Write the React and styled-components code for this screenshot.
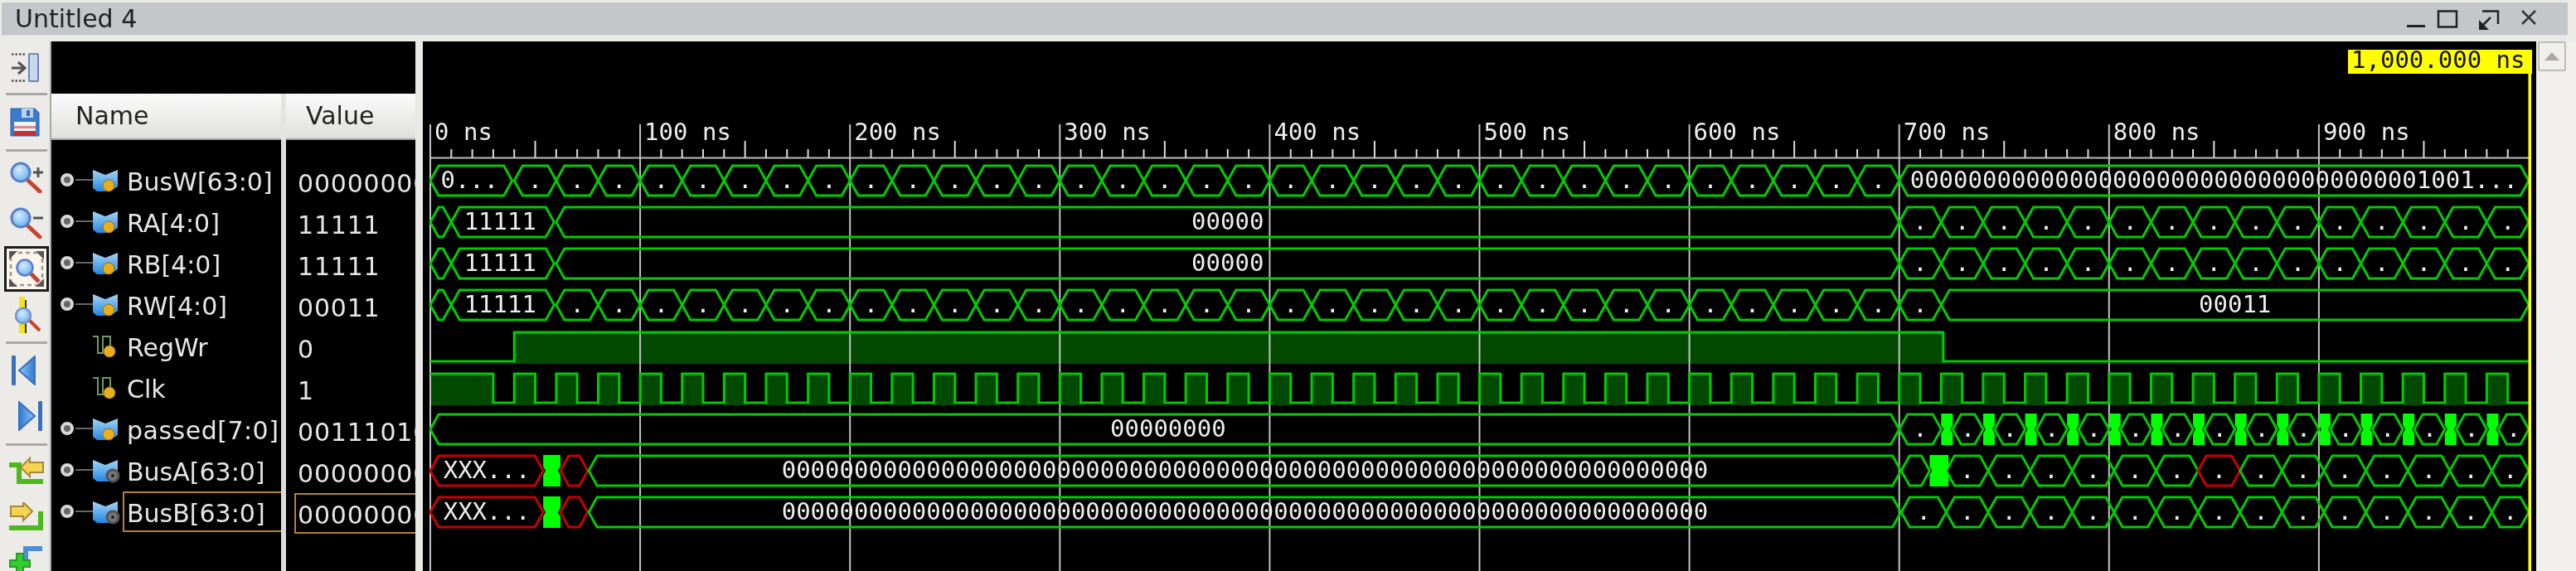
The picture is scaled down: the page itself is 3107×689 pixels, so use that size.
import React from "react";
import styled, { createGlobalStyle } from "styled-components";

const Global = createGlobalStyle`
  html, body { margin: 0; padding: 0; height: 100%; overflow: hidden; background: #eaeae6; }
  #root { height: 100%; }
`;

const Page = styled.div`
  width: 3107px;
  height: 689px;
  display: flex;
  flex-direction: column;
  overflow: hidden;
  background: #eaeae6;
  font-family: "DejaVu Sans", sans-serif;
  filter: blur(0.7px);
`;

const TitleBar = styled.div`
  height: 40px;
  margin: 3px 10px 0 2px;
  display: flex;
  align-items: center;
  justify-content: space-between;
  background: #c3c7ca;
  border-bottom: 1px solid #d8d8d6;
  box-sizing: border-box;
`;

const TitleText = styled.span`
  font-size: 30px;
  color: #222;
  margin-left: 16px;
  line-height: 40px;
`;

const WindowIcons = styled.svg`
  width: 198px;
  height: 40px;
  flex: none;
`;

const Body = styled.div`
  flex: 1;
  display: flex;
  margin-top: 7px;
  min-height: 0;
`;

const Toolbar = styled.div`
  width: 60px;
  flex: none;
  display: flex;
  flex-direction: column;
  background: #ecebe8;
  border-right: 2px solid #a9a9a6;
`;

const ToolSlot = styled.div`
  height: ${(p) => p.$h}px;
  padding-bottom: ${(p) => p.$pb || 0}px;
  padding-left: ${(p) => p.$pl || 0}px;
  box-sizing: border-box;
  flex: none;
  display: flex;
  align-items: center;
  justify-content: ${(p) => (p.$pl ? "flex-start" : "center")};
`;

const ToolSep = styled.div`
  height: 3px;
  flex: none;
  margin: 0 3px 0 7px;
  background: #a8a8a4;
`;

const ActiveTool = styled.div`
  width: 54px;
  height: 55px;
  margin-left: 4px;
  box-sizing: border-box;
  border: 3px solid #1c1c1c;
  background: #fbf5ea;
  display: flex;
  align-items: center;
  justify-content: center;
`;

const TreePane = styled.div`
  width: 439px;
  flex: none;
  display: flex;
  flex-direction: column;
  background: #000;
`;

const TreeTop = styled.div`
  height: 63px;
  flex: none;
  background: #000;
`;

const HeaderRow = styled.div`
  height: 56px;
  flex: none;
  display: flex;
  background: #e4e4e2;
`;

const HeaderCell = styled.div`
  width: ${(p) => p.$w}px;
  margin-left: ${(p) => p.$ml || 0}px;
  padding-left: ${(p) => p.$pl}px;
  box-sizing: border-box;
  font-size: 30px;
  line-height: 54px;
  color: #222;
  background: linear-gradient(#fbfbfb, #dfdfdd);
  border-bottom: 2px solid #9c9c9a;
`;

const TreeColumns = styled.div`
  flex: 1;
  display: flex;
  min-height: 0;
`;

const Column = styled.div`
  width: ${(p) => p.$w}px;
  flex: none;
  padding-top: ${(p) => p.$pt}px;
  box-sizing: border-box;
  overflow: hidden;
`;

const Divider = styled.div`
  width: 6px;
  flex: none;
  background: #dcdcda;
`;

const NameRow = styled.div`
  height: 50px;
  display: flex;
  align-items: flex-start;
  padding-left: 9px;
  box-sizing: border-box;
`;

const TreeGlyph = styled.svg`
  width: 80px;
  height: 50px;
  flex: none;
`;

const NameText = styled.div`
  flex: 1;
  height: 49px;
  margin-left: -3px;
  padding-left: 3px;
  box-sizing: border-box;
  font-size: 30px;
  line-height: 50px;
  letter-spacing: ${(p) => p.$tracking || 0}px;
  color: #e6e6e6;
  white-space: nowrap;
  border: 2px solid ${(p) => (p.$selected ? "#b5842a" : "transparent")};
  border-right: none;
  overflow: hidden;
`;

const ValueRow = styled.div`
  height: 49px;
  margin: 0 0 1px 10px;
  padding-left: 2px;
  box-sizing: border-box;
  font-size: 30px;
  letter-spacing: 0.8px;
  line-height: 50px;
  color: #e6e6e6;
  white-space: nowrap;
  overflow: hidden;
  border: 2px solid ${(p) => (p.$selected ? "#b5842a" : "transparent")};
  border-right: none;
`;

const Gap = styled.div`
  width: 9px;
  flex: none;
  background: #e8e8e5;
`;

const WavePane = styled.svg`
  width: 2549px;
  height: 639px;
  flex: none;
  display: block;
  background: #000;
`;

const WaveLabel = styled.text`
  font-family: "DejaVu Sans Mono", monospace;
  font-size: 29px;
  fill: ${(p) => p.$fill || "#eeeeee"};
`;

const ScrollColumn = styled.div`
  flex: 1;
  padding-left: 2px;
  background: #f1f0ed;
`;

const ScrollUp = styled.div`
  width: 34px;
  height: 36px;
  box-sizing: border-box;
  background: #f0efec;
  border: 2px solid #bdbdb9;
  border-radius: 2px;
  display: flex;
  align-items: center;
  justify-content: center;
`;

const ScrollArrow = styled.div`
  width: 0;
  height: 0;
  border-left: 9px solid transparent;
  border-right: 9px solid transparent;
  border-bottom: 10px solid #a8a8a4;
`;

/* ---------- toolbar drawings ---------- */
const lensDefs = (
  <radialGradient id="lens" cx="0.4" cy="0.35" r="0.8">
    <stop offset="0" stopColor="#d6ecff" />
    <stop offset="1" stopColor="#58a6ee" />
  </radialGradient>
);

const IconPin = () => (
  <svg width="33" height="35" viewBox="0 0 33 35">
    <path d="M0 1.5H18M0 33.5H18" stroke="#555" strokeWidth="2.5" strokeDasharray="2.5 2" />
    <path d="M0 18H15M8 11l8 7-8 7" fill="none" stroke="#555" strokeWidth="3" />
    <rect x="21" y="1" width="11" height="33" rx="1" fill="#c9d8ee" stroke="#6a86b8" strokeWidth="2" />
  </svg>
);

const IconSave = () => (
  <svg width="36" height="35" viewBox="0 0 36 35">
    <path d="M1 1H30L35 6V34H1Z" fill="#3a7ccc" stroke="#2c5fa8" />
    <rect x="14" y="1" width="14" height="11" fill="#b9d3f0" />
    <rect x="20" y="3" width="4" height="7" fill="#3a6ab0" />
    <rect x="5" y="17" width="26" height="17" fill="#f2f2f2" />
    <rect x="5" y="22" width="26" height="3" fill="#d98a8a" />
    <rect x="5" y="28" width="26" height="6" fill="#c62f36" />
  </svg>
);

const IconZoom = ({ plus }) => (
  <svg width="42" height="38" viewBox="0 0 42 38">
    <defs>{lensDefs}</defs>
    <path d="M21 21L37 36" stroke="#c8432e" strokeWidth="5" strokeLinecap="round" />
    <circle cx="14" cy="13" r="11" fill="url(#lens)" stroke="#5a7fc8" strokeWidth="3" />
    <path d="M29 13H41" stroke="#555" strokeWidth="3" />
    {plus && <path d="M35 7V19" stroke="#555" strokeWidth="3" />}
  </svg>
);

const IconFit = () => (
  <svg width="44" height="45" viewBox="0 0 44 45">
    <defs>{lensDefs}</defs>
    <rect x="3" y="3" width="38" height="39" fill="none" stroke="#999" strokeWidth="2.5" strokeDasharray="5 4" />
    <path d="M1 1H11L1 11ZM43 1H33L43 11ZM1 44H11L1 34ZM43 44H33L43 34Z" fill="#555" />
    <path d="M27 28L37 38" stroke="#c8432e" strokeWidth="5" />
    <circle cx="20" cy="21" r="9.5" fill="url(#lens)" stroke="#5a7fc8" strokeWidth="2.5" />
  </svg>
);

const IconCursor = () => (
  <svg width="32" height="44" viewBox="0 0 32 44">
    <defs>{lensDefs}</defs>
    <path d="M5 0h7v44h-7z" fill="#f3e318" />
    <path d="M12 4h2v40h-2z" fill="#333" />
    <path d="M15 26L30 41" stroke="#c8432e" strokeWidth="4" />
    <circle cx="10" cy="23" r="9" fill="url(#lens)" stroke="#7795c8" strokeWidth="2.5" />
  </svg>
);

const IconPrev = () => (
  <svg width="30" height="36" viewBox="0 0 30 36">
    <defs>
      <linearGradient id="tri" x1="0" x2="1">
        <stop offset="0" stopColor="#8cc8f6" />
        <stop offset="1" stopColor="#2f78d0" />
      </linearGradient>
    </defs>
    <rect x="0" y="0" width="5" height="36" rx="1" fill="#3b70b8" />
    <path d="M9 18L28 1V35Z" fill="url(#tri)" stroke="#3b70b8" strokeWidth="2" />
  </svg>
);

const IconNext = () => (
  <svg width="30" height="36" viewBox="0 0 30 36">
    <defs>
      <linearGradient id="tri2" x1="0" x2="1">
        <stop offset="0" stopColor="#2f78d0" />
        <stop offset="1" stopColor="#8cc8f6" />
      </linearGradient>
    </defs>
    <rect x="25" y="0" width="5" height="36" rx="1" fill="#3b70b8" />
    <path d="M21 18L2 1V35Z" fill="url(#tri2)" stroke="#3b70b8" strokeWidth="2" />
  </svg>
);

const IconImport = () => (
  <svg width="42" height="36" viewBox="0 0 42 36">
    <path d="M0 10H12V30H41" fill="none" stroke="#4cb81a" strokeWidth="6" />
    <path d="M14 13L25 2V7H41V19H25V24Z" fill="#f4d452" stroke="#a8873a" strokeWidth="2" />
  </svg>
);

const IconExport = () => (
  <svg width="42" height="36" viewBox="0 0 42 36">
    <path d="M0 31H38V11" fill="none" stroke="#4cb81a" strokeWidth="6" />
    <path d="M28 11L17 0V5H2V17H17V22Z" fill="#f4d452" stroke="#a8873a" strokeWidth="2" />
  </svg>
);

const IconAdd = () => (
  <svg width="42" height="36" viewBox="0 0 42 36">
    <path d="M20 24V6H40" fill="none" stroke="#4d8ed6" strokeWidth="6" />
    <path d="M9 12h8v8h8v8h-8v8H9v-8H1v-8h8z" fill="#2fd02a" stroke="#2a9a24" strokeWidth="2" />
  </svg>
);

/* ---------- signal tree ---------- */
const signals = [
  { name: "BusW[63:0]", value: "00000000", kind: "bus", badge: "lock" },
  { name: "RA[4:0]", value: "11111", kind: "bus", badge: "lock" },
  { name: "RB[4:0]", value: "11111", kind: "bus", badge: "lock" },
  { name: "RW[4:0]", value: "00011", kind: "bus", badge: "lock" },
  { name: "RegWr", value: "0", kind: "bit", badge: "lock" },
  { name: "Clk", value: "1", kind: "bit", badge: "lock" },
  { name: "passed[7:0]", value: "00111010", kind: "bus", badge: "lock", tracking: 0.5 },
  { name: "BusA[63:0]", value: "00000000", kind: "bus", badge: "gear" },
  { name: "BusB[63:0]", value: "00000000", kind: "bus", badge: "gear", selected: true },
];

const Glyph = ({ kind, badge, id }) => (
  <TreeGlyph viewBox="0 0 80 50">
    <defs>
      <linearGradient id={`blue${id}`} x1="0" y1="0" x2="0" y2="1">
        <stop offset="0" stopColor="#a6d4f2" />
        <stop offset="1" stopColor="#1f86e6" />
      </linearGradient>
    </defs>
    {kind === "bus" ? (
      <>
        <circle cx="10" cy="24" r="6" fill="#666" stroke="#d8d8d8" strokeWidth="4" />
        <path d="M20 24H41" stroke="#666" strokeWidth="2" />
        <path d="M41 12L56 18L71 12V32L62 38H46L41 34Z" fill={`url(#blue${id})`} />
      </>
    ) : (
      <path d="M41 13H47V33H53V13H62V32" fill="none" stroke="#6f9a5e" strokeWidth="2" />
    )}
    {badge === "lock" ? (
      <circle cx={kind === "bus" ? 60 : 61} cy="31" r="7" fill="#e8ae1e" stroke="#8d6d1a" />
    ) : (
      <>
        <circle cx="65" cy="31" r="7" fill="#777" stroke="#555" strokeWidth="3" />
        <circle cx="65" cy="31" r="2" fill="#222" />
      </>
    )}
  </TreeGlyph>
);

/* ---------- waveform data ---------- */
const X = (t) => 519 + 2.531 * t;
const rowTop = (i) => 200 + 50 * i;
const GREEN = "#00cc00";
const RED = "#c80000";

const seq = (from, to, step) => {
  const out = [];
  for (let t = from; t < to - 0.01; t += step) out.push([t, Math.min(t + step, to)]);
  return out;
};
const dots = (from, to, step = 20) => seq(from, to, step).map(([a, b]) => ({ a, b, label: "." }));

const buses = [
  [
    { a: 0, b: 39, label: "0...", dx: -2 },
    ...dots(40, 700),
    { a: 700, b: 1000, label: "0".repeat(35) + "1001..." },
  ],
  [
    { a: 0, b: 10 },
    { a: 10, b: 59, label: "11111", dx: -3 },
    { a: 60, b: 700, label: "00000" },
    ...dots(700, 1000),
  ],
  [
    { a: 0, b: 10 },
    { a: 10, b: 59, label: "11111", dx: -3 },
    { a: 60, b: 700, label: "00000" },
    ...dots(700, 1000),
  ],
  [
    { a: 0, b: 10 },
    { a: 10, b: 59, label: "11111", dx: -3 },
    ...dots(60, 720),
    { a: 720, b: 1000, label: "00011" },
  ],
];

const passedSegs = [
  { a: 0, b: 700, label: "00000000", dx: 4 },
  { a: 700, b: 720, label: "." },
  ...seq(725.5, 1000, 20).map(([a, b]) => ({ a, b: Math.min(a + 14.5, 1000), label: "." })),
];
const passedBlocks = seq(720, 1000, 20).map(([a]) => a);

const zeros64 = "0".repeat(64);
const tail = seq(722.4, 1000, 20);
const startA = [
  { a: 0, b: 53.8, label: "XXX...", color: RED },
  { a: 62, b: 75, color: RED },
  { a: 75.5, b: 700.8, label: zeros64 },
];
const busA = [
  ...startA,
  { a: 701, b: 714.5 },
  ...tail.map(([a, b], i) => ({ a, b, label: ".", color: i === 6 ? RED : GREEN })),
];
const busB = [
  ...startA,
  { a: 701, b: 722.4, label: "." },
  ...tail.map(([a, b]) => ({ a, b, label: "." })),
];

const Hex = ({ row, seg }) => {
  const top = rowTop(row);
  const bot = top + 36;
  const mid = top + 18;
  const x0 = X(seg.a);
  const x1 = X(seg.b);
  const s = Math.min(10, (x1 - x0) / 2);
  return (
    <>
      <path
        d={`M${x0} ${mid}L${x0 + s} ${top}H${x1 - s}L${x1} ${mid}L${x1 - s} ${bot}H${x0 + s}Z`}
        fill="none"
        stroke={seg.color || GREEN}
        strokeWidth="3"
      />
      {seg.label && (
        <WaveLabel x={(x0 + x1) / 2 + (seg.dx || 0)} y={top + 27} textAnchor="middle">
          {seg.label}
        </WaveLabel>
      )}
    </>
  );
};

const Block = ({ row, x0, x1 }) => {
  const top = rowTop(row) - 1;
  const bot = top + 38;
  const mid = top + 19;
  return (
    <path
      d={`M${x0} ${top}H${x1}V${mid - 5}L${x1 - 3} ${mid}L${x1} ${mid + 5}V${bot}H${x0}V${mid + 5}L${x0 + 3} ${mid}L${x0} ${mid - 5}Z`}
      fill="#00ff00"
    />
  );
};

const clockPath = () => {
  let d = `M${X(0)} 451H${X(30)}V486`;
  for (let t = 40; t < 1000; t += 20) {
    d += `H${X(t)}V451H${X(t + 10)}V486`;
  }
  return d + `H${X(1000)}`;
};

const Waves = () => {
  const minor = [];
  for (let t = 10; t < 1000; t += 10) {
    if (t % 100 === 0) continue;
    minor.push(t);
  }
  const major = [0, 100, 200, 300, 400, 500, 600, 700, 800, 900];
  const clkHigh = [[0, 30], ...seq(40, 1000, 20).map(([a]) => [a, a + 10])];
  return (
    <WavePane viewBox="510 50 2549 639">
      {/* fills */}
      <rect x={X(40)} y="401" width={X(721) - X(40)} height="38" fill="#024a02" />
      {clkHigh.map(([a, b]) => (
        <rect key={a} x={X(a)} y="451" width={X(b) - X(a)} height="38" fill="#024a02" />
      ))}

      {/* ruler */}
      <path d="M518 190.5H3051" stroke="#bdbdbd" strokeWidth="2" />
      {minor.map((t) => (
        <path key={t} d={`M${X(t)} ${t % 50 === 0 ? 170 : 180}V190`} stroke="#dddddd" strokeWidth="2" />
      ))}
      {major.map((t) => (
        <g key={t}>
          <path d={`M${X(t)} 150V689`} stroke="#c4c4c4" strokeWidth="2" />
          <WaveLabel x={X(t) + 5} y="169">{`${t} ns`}</WaveLabel>
        </g>
      ))}

      {/* buses */}
      {buses.map((segs, i) => segs.map((seg, k) => <Hex key={`${i}-${k}`} row={i} seg={seg} />))}

      {/* single-bit signals */}
      <path d={`M${X(0)} 436H${X(40)}V401H${X(721)}V436H${X(1000)}`} fill="none" stroke={GREEN} strokeWidth="3" />
      <path d={clockPath()} fill="none" stroke={GREEN} strokeWidth="3" />

      {/* passed */}
      {passedSegs.map((seg, k) => <Hex key={k} row={6} seg={seg} />)}
      {passedBlocks.map((t) => <Block key={t} row={6} x0={X(t)} x1={X(t) + 14} />)}

      {/* BusA / BusB */}
      {busA.map((seg, k) => <Hex key={k} row={7} seg={seg} />)}
      <Block row={7} x0={X(53.8)} x1={X(62)} />
      <Block row={7} x0={X(714.5)} x1={X(723.5)} />
      {busB.map((seg, k) => <Hex key={k} row={8} seg={seg} />)}
      <Block row={8} x0={X(53.8)} x1={X(62)} />

      {/* time cursor */}
      <rect x="3049.5" y="89" width="3.5" height="600" fill="#ffff00" />
      <rect x="2832" y="60" width="222" height="29" fill="#ffff00" />
      <WaveLabel x="2836" y="82" $fill="#111">1,000.000 ns</WaveLabel>
    </WavePane>
  );
};

export default function App() {
  return (
    <Page>
      <Global />
      <TitleBar>
        <TitleText>Untitled 4</TitleText>
        <WindowIcons viewBox="0 0 198 40">
          <path d="M4 28.5H26" stroke="#222" strokeWidth="3" />
          <rect x="42" y="10.5" width="22" height="19" fill="none" stroke="#222" strokeWidth="2.5" />
          <path d="M95 10.5H114V26" fill="none" stroke="#222" strokeWidth="2.5" />
          <path d="M105 18L95 28" stroke="#222" strokeWidth="2.5" />
          <path d="M91 21V33H103Z" fill="#222" />
          <path d="M143 10L159 26M159 10L143 26" stroke="#333" strokeWidth="2.5" />
        </WindowIcons>
      </TitleBar>
      <Body>
        <Toolbar>
          <ToolSlot $h={62}><IconPin /></ToolSlot>
          <ToolSep />
          <ToolSlot $h={65}><IconSave /></ToolSlot>
          <ToolSep />
          <ToolSlot $h={62} $pl={11}><IconZoom plus /></ToolSlot>
          <ToolSlot $h={48} $pl={11}><IconZoom /></ToolSlot>
          <ToolSlot $h={63} $pl={1}><ActiveTool><IconFit /></ActiveTool></ToolSlot>
          <ToolSlot $h={56} $pb={8} $pl={18}><IconCursor /></ToolSlot>
          <ToolSep />
          <ToolSlot $h={64} $pl={14}><IconPrev /></ToolSlot>
          <ToolSlot $h={56} $pb={10} $pl={21}><IconNext /></ToolSlot>
          <ToolSep />
          <ToolSlot $h={62} $pl={11}><IconImport /></ToolSlot>
          <ToolSlot $h={48} $pl={11}><IconExport /></ToolSlot>
          <ToolSlot $h={52} $pl={11}><IconAdd /></ToolSlot>
        </Toolbar>
        <TreePane>
          <TreeTop />
          <HeaderRow>
            <HeaderCell $w={277} $pl={29}>Name</HeaderCell>
            <HeaderCell $w={156} $ml={6} $pl={24}>Value</HeaderCell>
          </HeaderRow>
          <TreeColumns>
            <Column $w={277} $pt={24}>
              {signals.map((s, i) => (
                <NameRow key={s.name}>
                  <Glyph kind={s.kind} badge={s.badge} id={i} />
                  <NameText $selected={s.selected} $tracking={s.tracking}>{s.name}</NameText>
                </NameRow>
              ))}
            </Column>
            <Divider />
            <Column $w={156} $pt={26}>
              {signals.map((s) => (
                <ValueRow key={s.name} $selected={s.selected}>{s.value}</ValueRow>
              ))}
            </Column>
          </TreeColumns>
        </TreePane>
        <Gap />
        <Waves />
        <ScrollColumn>
          <ScrollUp><ScrollArrow /></ScrollUp>
        </ScrollColumn>
      </Body>
    </Page>
  );
}
